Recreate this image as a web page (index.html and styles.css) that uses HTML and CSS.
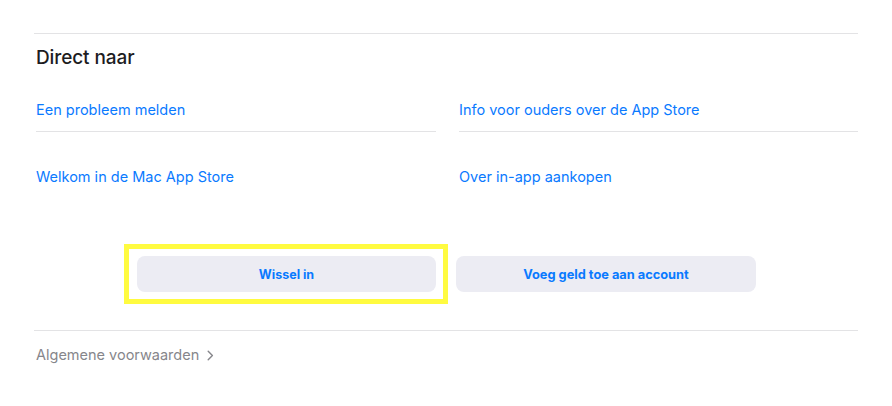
FILE: index.html
```html
<!DOCTYPE html>
<html lang="nl">
<head>
<meta charset="utf-8">
<title>Direct naar</title>
<link rel="stylesheet" href="styles.css">
</head>
<body>
<div class="page">
  <hr class="rule rule-top">
  <h2 class="heading">Direct naar</h2>
  <div class="links">
    <a class="link-cell with-border" href="#">Een probleem melden</a>
    <a class="link-cell with-border" href="#">Info voor ouders over de App Store</a>
    <a class="link-cell row2" href="#">Welkom in de Mac App Store</a>
    <a class="link-cell row2" href="#">Over in-app aankopen</a>
  </div>
  <div class="buttons">
    <button class="btn btn-focus" type="button">Wissel in</button>
    <button class="btn btn-wide" type="button">Voeg geld toe aan account</button>
  </div>
  <hr class="rule rule-bottom">
  <a class="footer-link" href="#">Algemene voorwaarden <span class="chev">
    <svg width="7" height="11" viewBox="0 0 7 11"><path d="M1.2 1.2 L5.4 5.5 L1.2 9.8" fill="none" stroke="#86868b" stroke-width="1.4" stroke-linecap="round" stroke-linejoin="round"/></svg>
  </span></a>
</div>
</body>
</html>
```

FILE: styles.css
```css
html, body {
  margin: 0;
  padding: 0;
  background: #ffffff;
}
body {
  font-family: Inter, "Noto Sans", "Liberation Sans", sans-serif;
  -webkit-font-smoothing: antialiased;
}
.page {
  padding: 0 34px 0 34px;
}
.rule {
  border: 0;
  height: 1px;
  background: #e3e3e5;
  margin: 0;
}
.rule-top {
  margin-top: 33px;
}
.heading {
  margin: 12px 0 0 2px;
  font-size: 19px;
  line-height: 24px;
  font-weight: 500;
  color: #1d1d1f;
  letter-spacing: -0.1px;
}
.links {
  display: grid;
  grid-template-columns: 400px 399px;
  column-gap: 23px;
  margin: 30px 0 0 2px;
}
.link-cell {
  display: block;
  font-size: 14.5px;
  line-height: 20px;
  color: #0a7aff;
  text-decoration: none;
}
.with-border {
  padding-bottom: 11px;
  border-bottom: 1px solid #e3e3e5;
}
.row2 {
  padding-top: 35px;
}
.buttons {
  display: flex;
  justify-content: center;
  gap: 20px;
  margin-top: 69px;
  padding-left: 1px;
}
.btn {
  position: relative;
  width: 299px;
  height: 36px;
  border: 0;
  border-radius: 8px;
  background: #ececf3;
  color: #0a7aff;
  font-family: Inter, "Noto Sans", "Liberation Sans", sans-serif;
  font-size: 12.5px;
  font-weight: 700;
  padding: 0;
}
.btn-wide {
  width: 300px;
  font-size: 12.8px;
}
.btn-focus::after {
  content: "";
  position: absolute;
  left: -13px;
  right: -12px;
  top: -12px;
  bottom: -12px;
  border: 5px solid #fffb40;
  pointer-events: none;
}
.rule-bottom {
  margin-top: 38px;
}
.footer-link {
  display: inline-flex;
  align-items: center;
  gap: 8px;
  margin: 14px 0 0 2px;
  font-size: 14.5px;
  line-height: 20px;
  color: #86868b;
  text-decoration: none;
}
.chev {
  display: inline-flex;
  margin-top: 1px;
}
```
